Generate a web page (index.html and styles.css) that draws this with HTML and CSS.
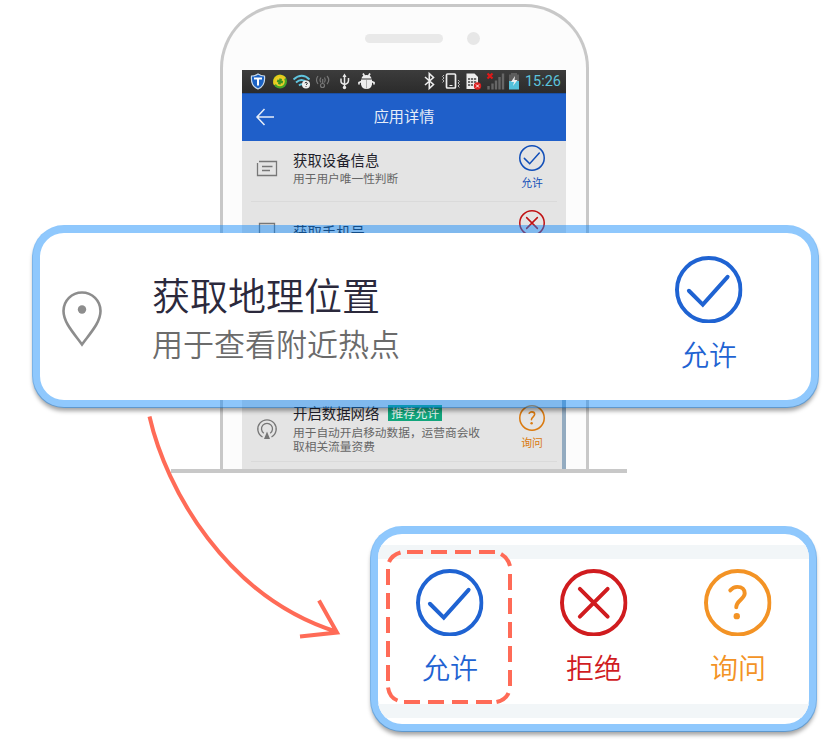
FILE: index.html
```html
<!DOCTYPE html>
<html lang="zh-CN">
<head>
<meta charset="utf-8">
<title>应用详情</title>
<link rel="stylesheet" href="styles.css">
</head>
<body>
<svg width="0" height="0" class="defs">
  <symbol id="allow" viewBox="0 0 68 68"><circle cx="34" cy="34" r="32"/><path d="M14 35l14 14 25-28"/></symbol>
  <symbol id="deny" viewBox="0 0 68 68"><circle cx="34" cy="34" r="32"/><path d="M20 20l28 28M48 20L20 48"/></symbol>
  <symbol id="ask" viewBox="0 0 68 68"><circle cx="34" cy="34" r="32"/><path d="M26.500 21.500c2-2.500 4-3.500 7-3.500 5 0 7.500 3 7.500 6.500 0 6-8.500 7-8.500 14"/><circle class="dot" cx="33" cy="47.500" r="3.200"/></symbol>
</svg>
<main class="stage">
  <section class="phone">
    <div class="bezel"><i class="speaker"></i><i class="camera"></i></div>
    <div class="screen">
      <div class="status">
        <svg class="status-icons" width="324" height="23" viewBox="242 70 324 23">
          <path d="M258 74q3 2 6.500 2q1 10-6.500 13q-7.500-3-6.500-13q3.500 0 6.500-2z" fill="#1b62c4" stroke="#c9dbec" stroke-width="1.200"/>
          <path d="M254 78.500h8M258 78.500v7" stroke="#fff" stroke-width="2"/>
          <circle cx="280" cy="81.500" r="7" fill="#47a528"/><path d="M274 85.200A7 7 0 0 1 286 78z" fill="#e9c81c"/><circle cx="280" cy="81.500" r="4.800" fill="#e9cf2a"/><path d="M280 78.500v6M277 81.500h6" stroke="#3b9420" stroke-width="2.600" transform="rotate(15 280 81.500)"/>
          <g fill="none" stroke="#60c5df" stroke-width="1.900"><path d="M293.500 79.500q8.500-7.500 16 0M296 82.500q5.500-5 11 0M299 85.500q2.500-2.500 5 0"/></g>
          <circle cx="306" cy="84.500" r="4" fill="#eee"/><path d="M304.800 83q1.500-1.500 2.500 0q0 1-1.200 2M306 86.200v.8" fill="none" stroke="#333"/>
          <g fill="none" stroke="#777" stroke-width="1.200"><path d="M318 76q-3 4 0 8M321 77.500q-2 2.500 0 5M327 76q3.500 4 0 8M324.500 77.500q1.500 2.500 0 5M322.700 79v4.500"/><circle cx="322.500" cy="85.500" r="2"/></g>
          <g fill="none" stroke="#e8e8e8" stroke-width="1.500"><path d="M344.500 75v13M341 78.500v3q0 2 3.500 3q4-1 4-4V78"/></g><path d="M342.500 77l2-3.500 2 3.500z" fill="#e8e8e8"/><circle cx="344.500" cy="87.500" r="1.700" fill="#e8e8e8"/>
          <path d="M361.500 78.500q.5-3.500 5-3.500t5 3.500zM361 79.500h11v5q-1 4.500-5.500 4.500t-5.500-4.500z" fill="#eee"/><path d="M363 73.500l1.500 2.500M370 73.500l-1.500 2.500M361.500 81.500l-2.500 1v2M371.500 81.500l2.500 1v2" stroke="#eee" stroke-width="1.700" fill="none"/><path d="M366.500 79.500v9" stroke="#888" stroke-width=".6"/>
          <path d="M425 77l8.500 7.500-4.200 4V73.500l4.200 4L425 85" fill="none" stroke="#eee" stroke-width="1.600"/>
          <rect x="446.500" y="74" width="9" height="14" rx="1" fill="none" stroke="#eee" stroke-width="1.700"/><path d="M449.500 85.500h3" stroke="#eee"/><path d="M444 75l-1.500 1.500 1.500 1.500-1.500 1.500 1.500 1.500-1.500 1.500M458 80l1.500 1.500-1.500 1.500 1.500 1.500-1.500 1.500 1.500 1.500" fill="none" stroke="#bbb"/>
          <path d="M466.500 73.500h8l3.500 3.500v12h-11.500z" fill="#eee"/><path d="M468 79h8.500M468 82h8.500M468 85h5" stroke="#444" stroke-width="1.500" stroke-dasharray="2.200 .8"/><circle cx="477.500" cy="86" r="3.700" fill="#dc2020"/><path d="M476 84.500l3 3M479 84.500l-3 3" stroke="#fff"/>
          <path d="M488.500 86v3.500M492.500 83.500v6M496 80.500v9M499.500 77v12.500M503 73.500v16" stroke="#666" stroke-width="2.400"/><path d="M487.500 73.500l5 5M492.500 73.500l-5 5" stroke="#e01818" stroke-width="2.200"/>
          <path d="M511 73h6v1.500h2v7h-10v-7h2z" fill="#5d5d5d"/><path d="M509 81h10v8.500h-10z" fill="#53c1da"/><path d="M515 76l-4 6h3l-1 4 4.500-6h-3z" fill="#eee"/>
        </svg>
        <span class="clock">15:26</span>
      </div>
      <header class="appbar">
        <svg class="back" width="20" height="20" viewBox="0 0 20 20"><path d="M9.500 2L2 10l7.500 8M2 10h17"/></svg>
        <h1>应用详情</h1>
      </header>
      <div class="row first">
        <svg class="glyph" width="22" height="22" viewBox="0 0 22 22"><path d="M1.500 5v12.500h19v-14H3M6 8.500h10.500M6 12.500h8"/></svg>
        <div class="info"><h2>获取设备信息</h2><p>用于用户唯一性判断</p></div>
        <div class="state allow"><svg><use href="#allow"/></svg><span>允许</span></div>
      </div>
      <div class="row phone-number">
        <svg class="glyph" width="22" height="22" viewBox="0 0 22 22"><path d="M3.500 20V2.500h15V20"/></svg>
        <div class="info"><h2>获取手机号</h2></div>
        <div class="state deny"><svg><use href="#deny"/></svg></div>
      </div>
      <div class="covered"></div>
      <div class="row network">
        <svg class="glyph" width="22" height="22" viewBox="0 0 22 22"><path d="M6.500 19a9.200 9.200 0 1 1 9 0M7.800 15.300a5.500 5.500 0 1 1 6.400 0"/><path class="solid" d="M11 13.500l3 7.500H8z"/></svg>
        <div class="info"><h2>开启数据网络<b>推荐允许</b></h2><p>用于自动开启移动数据，运营商会收</p><p>取相关流量资费</p></div>
        <div class="state ask"><svg><use href="#ask"/></svg><span>询问</span></div>
      </div>
      <div class="tail"></div>
    </div>
  </section>
  <div class="ground"></div>

  <section class="card location">
    <svg class="pin" width="42" height="58" viewBox="0 0 42 58"><path d="M21 54.500C14 44.500 2.500 33 2.500 21a18.500 18.500 0 0 1 37 0C39.500 33 28 44.500 21 54.500z"/><circle cx="21" cy="19.500" r="4.200"/></svg>
    <div class="location-text"><h2>获取地理位置</h2><p>用于查看附近热点</p></div>
    <div class="choice allow"><svg><use href="#allow"/></svg><span>允许</span></div>
  </section>

  <section class="card options">
    <div class="choices">
      <div class="choice allow"><svg><use href="#allow"/></svg><span>允许</span></div>
      <div class="choice deny"><svg><use href="#deny"/></svg><span>拒绝</span></div>
      <div class="choice ask"><svg><use href="#ask"/></svg><span>询问</span></div>
    </div>
  </section>

  <svg class="marks" width="840" height="746" viewBox="0 0 840 746">
    <path d="M149.500 416.500C166 489 226 597 337 632M319 600.500l18 32-37 4"/>
    <path d="M407 552h16m8 0h16m8 0h16m8 0h16M501 554q7 4 9 12M510 574v16m0 8v16m0 8v16m0 8v16m0 8v16M508.500 693q-3 7-12 9M492 702h-16m-8 0h-16m-8 0h-16m-8 0h-16M397.500 700.500q-8-3-9.500-13M388 681v-16m0-8v-16m0-8v-16m0-8v-16m0-8v-16M389 562q3-7 11.500-9.500"/>
  </svg>
</main>
</body>
</html>
```
FILE: styles.css
```css
* { box-sizing: border-box; margin: 0; padding: 0; }
body {
  width: 840px;
  height: 746px;
  overflow: hidden;
  background: #fff;
  font-family: "Noto Sans CJK SC", sans-serif;
}
h1, h2, b { font-weight: 400; }
svg { display: block; flex: none; }
.defs { position: absolute; }
.stage { position: relative; height: 746px; padding-top: 4px; }

.phone {
  width: 369px;
  height: 465px;
  margin-left: 220px;
  border: 3px solid #c8c8c8;
  border-bottom: 0;
  border-radius: 64px 64px 0 0;
  background: #fcfcfc;
  overflow: hidden;
}
.bezel { display: flex; align-items: center; height: 63px; padding: 0 0 0 142px; }
.speaker { width: 78px; height: 9px; border-radius: 5px; background: #e9e9e9; }
.camera { width: 13px; height: 13px; margin-left: 24px; border-radius: 50%; background: #e7e7e7; }
.screen { width: 324px; height: 399px; margin-left: 19px; background: #e4e4e4; }
.status { position: relative; height: 23px; background: linear-gradient(#3c3c3c, #2b2b2b); }
.clock {
  position: absolute;
  right: 5px;
  top: 0;
  color: #5cc3dc;
  font: 14.500px/24px Roboto, sans-serif;
}
.appbar {
  display: flex;
  align-items: center;
  height: 48px;
  padding: 0 0 1px 13px;
  border-top: 1px solid #1a4fa6;
  background: #1f5fc9;
  color: #e6edf8;
}
.back { fill: none; stroke: #e6edf8; stroke-width: 1.500; }
.appbar h1 { width: 258px; padding-bottom: 5px; text-align: center; font-size: 15.200px; line-height: 24px; }

.row {
  display: flex;
  height: 65px;
  padding-left: 14px;
  background: linear-gradient(#dadada, #dadada) 9px 100% / 306px 1px no-repeat;
}
.row.first { height: 61px; }
.glyph { fill: none; stroke: #777; stroke-width: 1.300; }
.glyph .solid { fill: #777; stroke: none; }
.info { width: 226px; padding-left: 15px; }
.info h2 { display: flex; align-items: center; color: #1f1f2b; font-size: 14.400px; line-height: 20px; }
.info p { color: #666; font-size: 11.700px; line-height: 14px; white-space: nowrap; }
.info b {
  width: 54px;
  height: 16px;
  margin: -3px 0 0 9px;
  background: #12a57c;
  color: #e4f2ee;
  font-size: 12px;
  line-height: 16px;
  text-align: center;
}
.first .glyph { margin-top: 17px; }
.first .info { padding-top: 9px; }
.first .info p { margin-top: 1px; }
.phone-number .glyph { margin-top: 19px; }
.phone-number .info { padding-top: 20px; }
.covered { height: 130px; }
.network .glyph { margin-top: 21px; }
.network .info { padding-top: 6px; }
.network .info h2 { margin-bottom: 2px; }
.network .info b { margin-top: -1px; }

.allow { color: #1f63d2; }
.deny { color: #d01c1f; }
.ask { color: #f39325; }
.state svg, .choice svg {
  fill: none;
  stroke: currentColor;
  stroke-width: 4;
  stroke-linecap: round;
}
.dot { fill: currentColor; stroke: none; }
.state { display: flex; flex: none; flex-direction: column; align-items: center; width: 44px; padding-top: 8px; margin-left: 6px; }
.state svg { width: 26px; height: 26px; }
.state span { margin-top: 3px; font-size: 10.800px; line-height: 16px; }
.first .state { padding-top: 4px; }
.state.allow { color: #124fb8; }
.state.deny { color: #c01214; }
.state.ask { color: #da7a10; }
.tail { width: 324px; height: 7px; }
.network, .tail { border-right: 4px solid #93abc0; }

.ground { width: 456px; height: 4px; margin-left: 171px; background: #c8c8c8; }

.card {
  border: 8px solid rgba(6, 133, 251, .45);
  border-radius: 32px;
  background: #fff padding-box;
  box-shadow: 0 4px 4px -1px rgba(0, 0, 0, .36);
}
.location {
  position: absolute;
  left: 32px;
  top: 225px;
  display: flex;
  width: 787px;
  height: 183px;
  padding-left: 21px;
}
.pin { margin-top: 57px; fill: none; stroke: #8d8d8d; stroke-width: 2.600; }
.pin circle { fill: #8d8d8d; stroke: none; }
.location-text { flex: none; width: 557px; padding: 37px 0 0 49px; }
.location-text h2 { color: #2b293c; font-size: 38px; font-weight: 350; line-height: 48px; }
.location-text p { margin-top: 1px; color: #6b6b6b; font-size: 31px; font-weight: 350; line-height: 48px; }
.choice { display: flex; flex: none; flex-direction: column; align-items: center; width: 68px; }
.choice svg { width: 67.500px; height: 67.500px; }
.choice span { margin-top: 10.500px; font-size: 28px; font-weight: 350; line-height: 40px; }
.location .choice { margin-top: 22.500px; margin-left: 15px; }
.options {
  width: 447px;
  height: 206px;
  margin: 53px 0 0 370px;
  padding: 11px 0;
  overflow: hidden;
}
.choices {
  display: flex;
  gap: 76px;
  height: 173px;
  padding: 9.500px 0 0 38px;
  border: solid #f2f6f8;
  border-width: 14px 0;
}
.marks { position: absolute; left: 0; top: 0; fill: none; stroke: #ff6b57; stroke-width: 4; }
```
